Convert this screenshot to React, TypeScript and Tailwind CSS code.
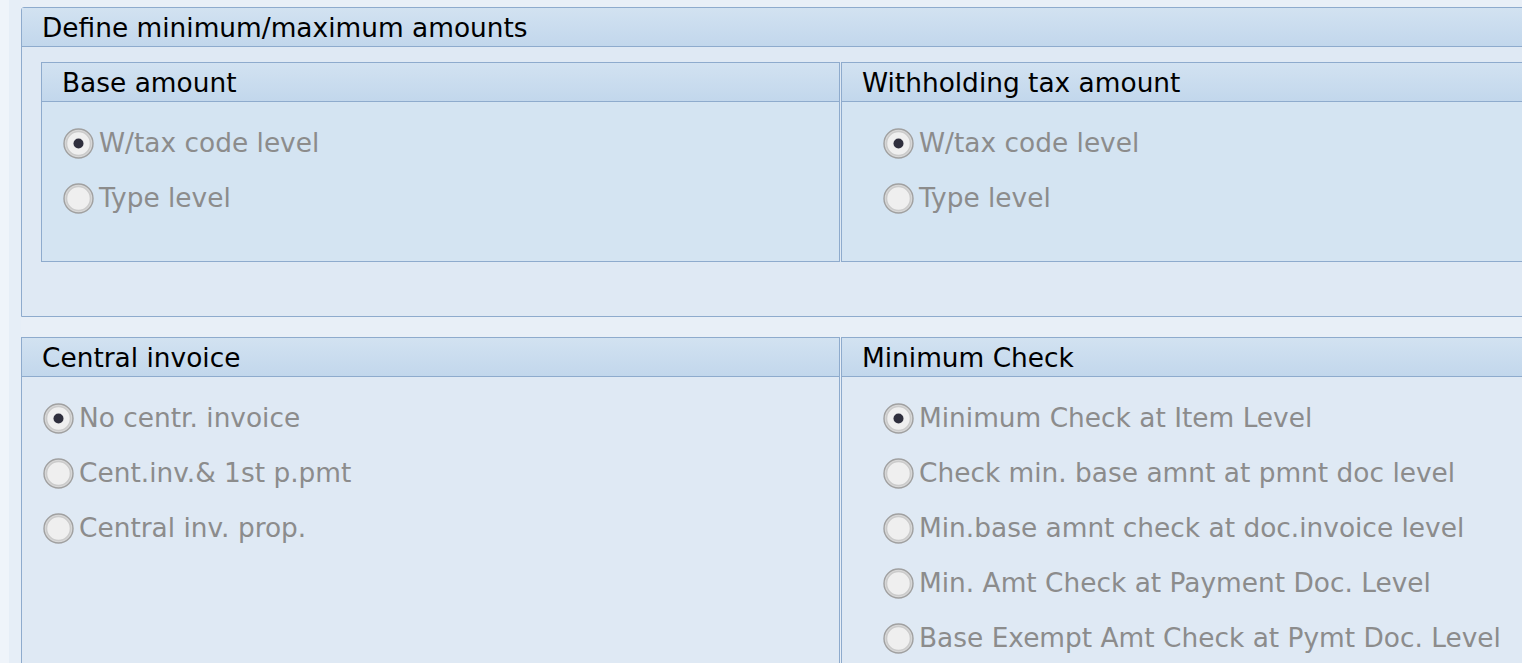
import React from 'react'

const font = { fontFamily: '"DejaVu Sans", Verdana, sans-serif' }

function Radio({ checked }: { checked?: boolean }) {
  return (
    <svg width="31" height="31" viewBox="0 0 31 31" className="shrink-0">
      <circle cx="15.5" cy="15.5" r="14.5" fill="#d9d9d9" stroke="#a0a0a0" strokeWidth="1.4" />
      <circle cx="15.5" cy="15.5" r="12" fill="#efefef" stroke="#cbcbcb" strokeWidth="1.6" />
      {checked && <circle cx="15.5" cy="15.5" r="5" fill="#2f2f3d" />}
    </svg>
  )
}

function Option({ label, checked, indent }: { label: string; checked?: boolean; indent: string }) {
  return (
    <div className={`flex h-[55px] items-center gap-[5px] ${indent}`}>
      <Radio checked={checked} />
      <span className="text-[26.4px] leading-none text-[#8c8c8c]">{label}</span>
    </div>
  )
}

function Header({ title }: { title: string }) {
  return (
    <div className="flex h-[39px] items-center border-b border-[#8eabcd] bg-gradient-to-b from-[#d2e2f1] to-[#c2d7ec] pt-[2px] pl-[20px] text-[26.4px] leading-none text-black">
      {title}
    </div>
  )
}

function Group({
  title,
  options,
  className,
  indent = 'pl-[21px]',
}: {
  title: string
  options: { label: string; checked?: boolean }[]
  className?: string
  indent?: string
}) {
  return (
    <div className={`flex flex-col border border-[#8eabcd] ${className ?? ''}`}>
      <Header title={title} />
      <div className="flex-1 pt-[14px]">
        {options.map((o) => (
          <Option key={o.label} label={o.label} checked={o.checked} indent={indent} />
        ))}
      </div>
    </div>
  )
}

export default function App() {
  const levels = [{ label: 'W/tax code level', checked: true }, { label: 'Type level' }]

  return (
    <div style={font} className="flex h-[663px] w-[1522px] overflow-hidden bg-[#e8eff7]">
      <div className="flex w-[21px] shrink-0">
        <div className="w-[9px] bg-[#eff4fa]" />
        <div className="flex-1 bg-[#e6eef7]" />
      </div>

      <div className="flex w-[1540px] shrink-0 flex-col pt-[7px]">
        {/* Define minimum/maximum amounts */}
        <div className="flex flex-col rounded-tl-[3px] border border-[#8eabcd] bg-[#dfe9f4]">
          <Header title="Define minimum/maximum amounts" />
          <div className="flex gap-[1px] pt-[15px] pb-[54px] pl-[19px]">
            <Group title="Base amount" options={levels} className="h-[200px] w-[799px] shrink-0 bg-[#d4e4f2]" />
            <Group
              title="Withholding tax amount"
              options={levels}
              indent="pl-[41px]"
              className="h-[200px] flex-1 bg-[#d4e4f2]"
            />
          </div>
        </div>

        <div className="mt-[20px] flex flex-1 gap-[1px]">
          <Group
            title="Central invoice"
            options={[
              { label: 'No centr. invoice', checked: true },
              { label: 'Cent.inv.& 1st p.pmt' },
              { label: 'Central inv. prop.' },
            ]}
            className="w-[819px] shrink-0 bg-[#dfe9f4]"
          />
          <Group
            title="Minimum Check"
            options={[
              { label: 'Minimum Check at Item Level', checked: true },
              { label: 'Check min. base amnt at pmnt doc level' },
              { label: 'Min.base amnt check at doc.invoice level' },
              { label: 'Min. Amt Check at Payment Doc. Level' },
              { label: 'Base Exempt Amt Check at Pymt Doc. Level' },
            ]}
            indent="pl-[41px]"
            className="flex-1 bg-[#dfe9f4]"
          />
        </div>
      </div>
    </div>
  )
}
